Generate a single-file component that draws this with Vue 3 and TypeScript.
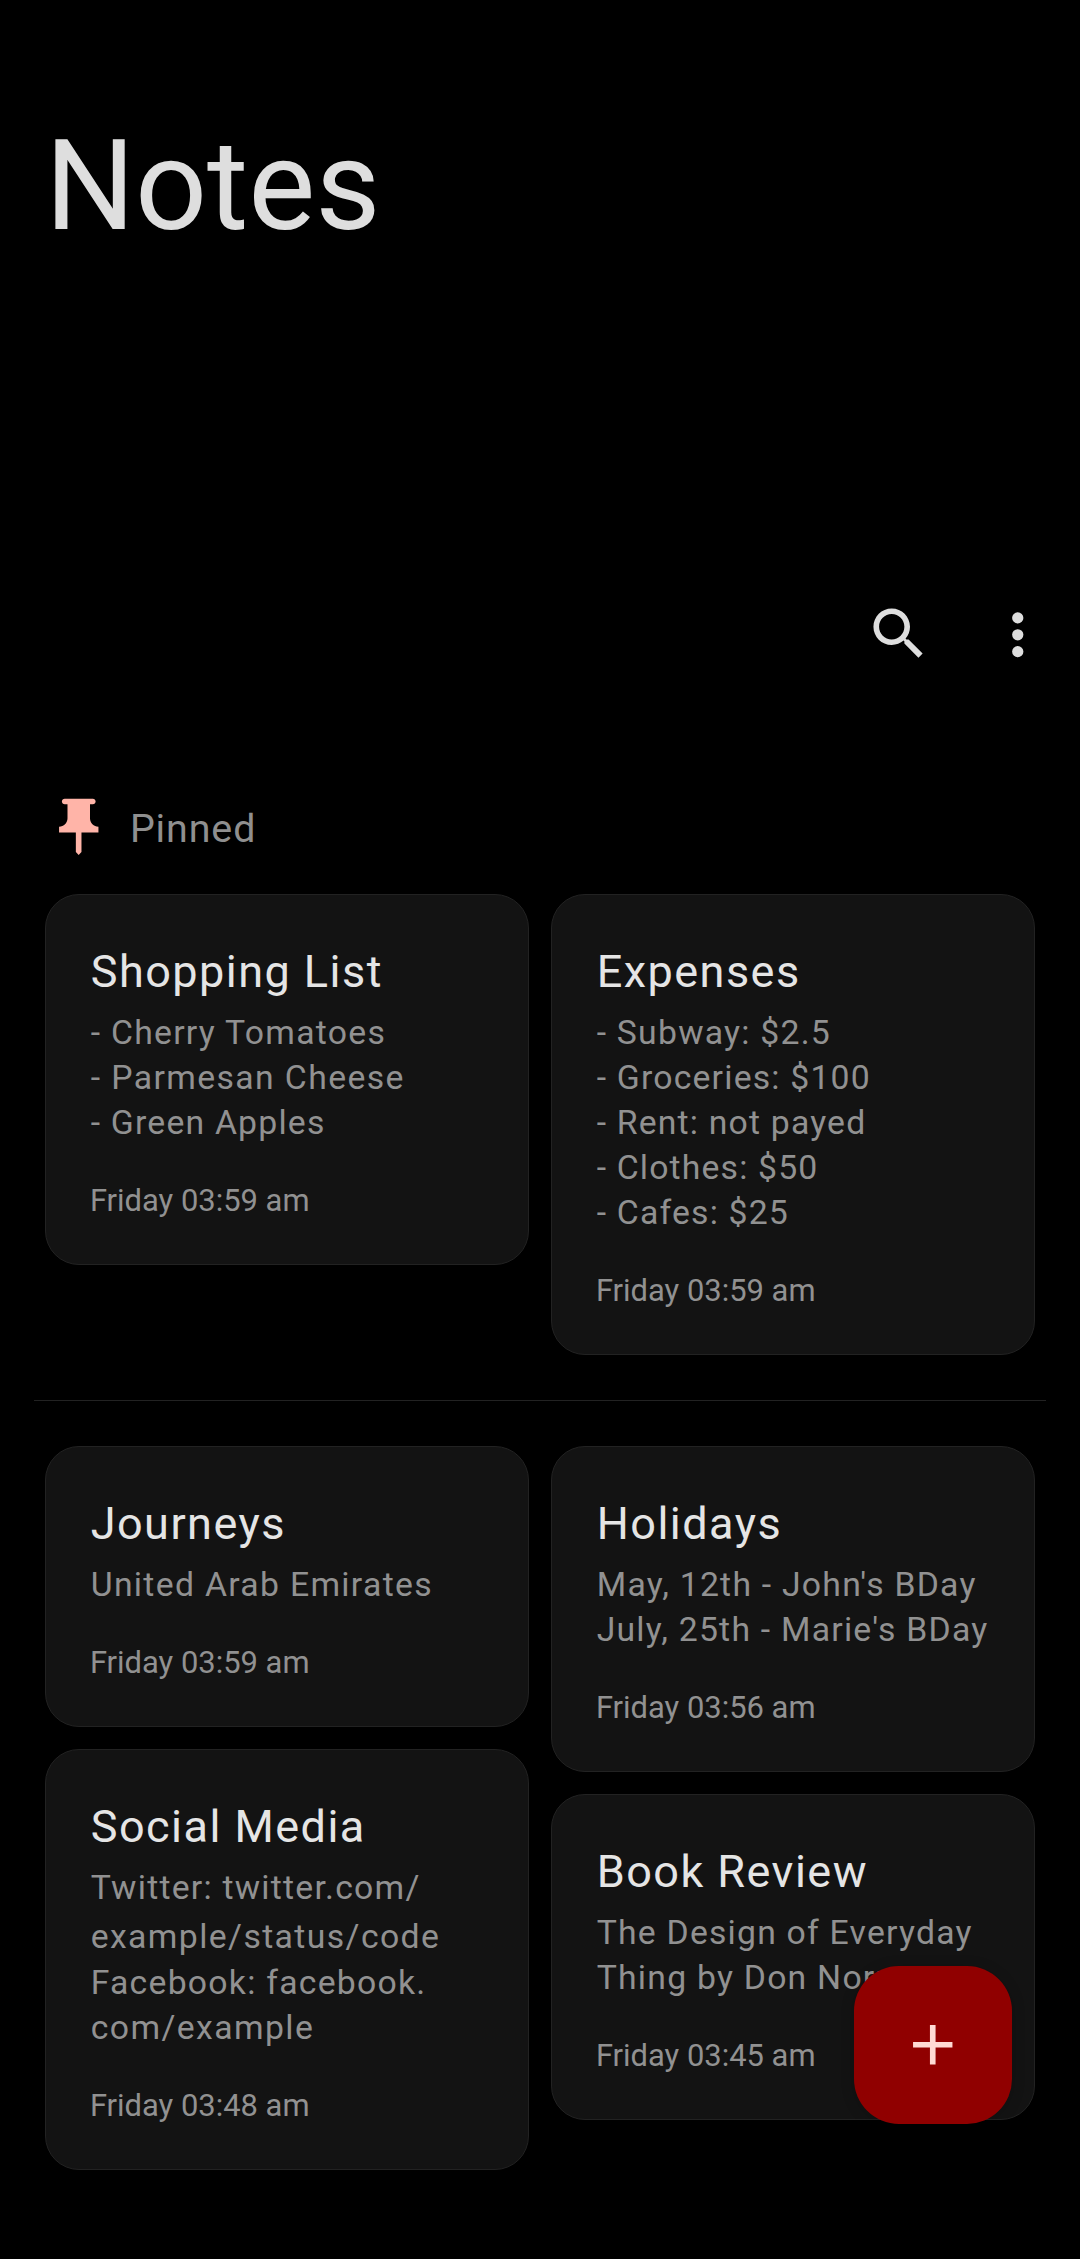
<script setup lang="ts">
interface Line {
  text: string
  /** Letter spacing, in pixels */
  tracking: number
  /** Extra leading above the line, in pixels */
  lead?: number
}

interface Note {
  title: string
  lines: Line[]
  date: string
}

const pinned: Note[][] = [
  [
    {
      title: 'Shopping List',
      lines: [
        { text: '- Cherry Tomatoes', tracking: 1.26 },
        { text: '- Parmesan Cheese', tracking: 1.39 },
        { text: '- Green Apples', tracking: 1.2 },
      ],
      date: 'Friday 03:59 am',
    },
  ],
  [
    {
      title: 'Expenses',
      lines: [
        { text: '- Subway: $2.5', tracking: 1.23 },
        { text: '- Groceries: $100', tracking: 1.19 },
        { text: '- Rent: not payed', tracking: 1.18 },
        { text: '- Clothes: $50', tracking: 1.16 },
        { text: '- Cafes: $25', tracking: 1.18 },
      ],
      date: 'Friday 03:59 am',
    },
  ],
]

const others: Note[][] = [
  [
    {
      title: 'Journeys',
      lines: [{ text: 'United Arab Emirates', tracking: 1.31 }],
      date: 'Friday 03:59 am',
    },
    {
      title: 'Social Media',
      lines: [
        { text: 'Twitter: twitter.com/', tracking: 1.23 },
        { text: 'example/status/code', tracking: 1.39, lead: 4 },
        { text: 'Facebook: facebook.', tracking: 1.24, lead: 1 },
        { text: 'com/example', tracking: 1.4 },
      ],
      date: 'Friday 03:48 am',
    },
  ],
  [
    {
      title: 'Holidays',
      lines: [
        { text: "May, 12th - John's BDay", tracking: 1.24 },
        { text: "July, 25th - Marie's BDay", tracking: 1.23 },
      ],
      date: 'Friday 03:56 am',
    },
    {
      title: 'Book Review',
      lines: [
        { text: 'The Design of Everyday', tracking: 1.21 },
        { text: 'Thing by Don Norman', tracking: 1.23 },
      ],
      date: 'Friday 03:45 am',
    },
  ],
]

const sections = [
  { id: 'pinned', columns: pinned },
  { id: 'others', columns: others },
]

const lineStyle = (line: Line) => ({
  letterSpacing: `${line.tracking}px`,
  paddingTop: `${line.lead ?? 0}px`,
})
</script>

<template>
  <div class="screen">
    <header class="header">
      <h1 class="heading">Notes</h1>
      <div class="toolbar">
        <button class="icon-button" aria-label="Search">
          <svg viewBox="0 0 24 24">
            <path
              d="M15.5 14h-.79l-.28-.27C15.41 12.59 16 11.11 16 9.5 16 5.91 13.09 3 9.5 3S3 5.91 3 9.5 5.91 16 9.5 16c1.61 0 3.09-.59 4.23-1.57l.27.28v.79l5 4.99L20.49 19l-4.99-5zm-6 0C7.01 14 5 11.99 5 9.5S7.01 5 9.5 5 14 7.01 14 9.5 11.99 14 9.5 14z"
            />
          </svg>
        </button>
        <button class="icon-button menu" aria-label="More options">
          <svg viewBox="0 0 24 24">
            <circle cx="12" cy="6" r="2" />
            <circle cx="12" cy="12" r="2" />
            <circle cx="12" cy="18" r="2" />
          </svg>
        </button>
      </div>
    </header>

    <div class="label">
      <svg class="pin" viewBox="0 0 24 24">
        <path
          d="M16 9V4h1c.55 0 1-.45 1-1s-.45-1-1-1H7c-.55 0-1 .45-1 1s.45 1 1 1h1v5c0 1.66-1.34 3-3 3v2h5.97v7l1 1 1-1v-7H19v-2c-1.66 0-3-1.34-3-3z"
        />
      </svg>
      <span class="label-text">Pinned</span>
    </div>

    <main class="content">
      <section v-for="section in sections" :key="section.id" class="board">
        <div v-for="(column, c) in section.columns" :key="c" class="column">
          <article v-for="note in column" :key="note.title" class="card">
            <h2 class="title">{{ note.title }}</h2>
            <div class="body">
              <p
                v-for="line in note.lines"
                :key="line.text"
                class="line"
                :style="lineStyle(line)"
              >
                {{ line.text }}
              </p>
            </div>
            <time class="date">{{ note.date }}</time>
          </article>
        </div>
      </section>
    </main>

    <button class="fab" aria-label="New note">
      <svg viewBox="0 0 24 24">
        <path d="M19 13h-6v6h-2v-6H5v-2h6V5h2v6h6v2z" />
      </svg>
    </button>
  </div>
</template>

<style>
body {
  margin: 0;
  background: #000;
}
</style>

<style scoped>
.screen {
  position: relative;
  box-sizing: border-box;
  width: 1080px;
  height: 2259px;
  overflow: hidden;
  background: #000;
  color: #dedede;
  font-family: Roboto, sans-serif;
  font-weight: 400;
}

.header {
  display: flex;
  flex-direction: column;
  justify-content: space-between;
  box-sizing: border-box;
  height: 668px;
  padding: 111px 29px 0 45px;
}

.heading {
  margin: 0;
  font-size: 126.5625px;
  font-weight: 400;
  line-height: 150px;
  letter-spacing: -0.2px;
}

.toolbar {
  display: flex;
  justify-content: flex-end;
  gap: 51px;
}

button {
  margin: 0;
  padding: 0;
  border: 0;
  background: none;
}

.icon-button {
  width: 67.5px;
  height: 67.5px;
  color: #dedede;
}

.menu {
  margin-top: 1px;
}

svg {
  display: block;
  width: 67.5px;
  height: 67.5px;
  fill: currentColor;
}

.label {
  display: flex;
  height: 101px;
  padding: 125px 0 0 45.4px;
}

.pin {
  color: #ffb4a8;
}

.label-text {
  margin: 12px 0 0 17px;
  color: #8f8f8f;
  font-size: 39.375px;
  line-height: 47px;
  letter-spacing: 0.9px;
}

.content {
  padding: 0 34px;
}

.board {
  display: flex;
  gap: 22px;
  padding: 0 11px;
}

.board + .board {
  margin-top: 45px;
  padding-top: 45px;
  border-top: 1px solid #222;
}

.column {
  display: flex;
  flex: 1;
  flex-direction: column;
  align-items: stretch;
  gap: 22px;
  min-width: 0;
}

.card {
  box-sizing: border-box;
  padding: 49px 20px 45px 44.7px;
  border: 1px solid #222;
  border-radius: 34px;
  background: #131313;
}

.title {
  margin: 0 0 11px;
  color: #e5e5e5;
  font-size: 45px;
  font-weight: 400;
  line-height: 55px;
  letter-spacing: 1.47px;
}

.body {
  margin-bottom: 37px;
  color: #919191;
  font-size: 33.75px;
}

.line {
  margin: 0;
  line-height: 45px;
  white-space: nowrap;
}

.date {
  display: block;
  margin-left: -0.8px;
  color: #919191;
  font-size: 30.9375px;
  line-height: 37px;
}

.fab {
  position: absolute;
  right: 68px;
  bottom: 135px;
  display: flex;
  align-items: center;
  justify-content: center;
  width: 158px;
  height: 158px;
  border-radius: 45px;
  background: #900000;
  box-shadow: 0 2px 14px rgba(0, 0, 0, 0.18);
  color: #ffdad4;
}
</style>
